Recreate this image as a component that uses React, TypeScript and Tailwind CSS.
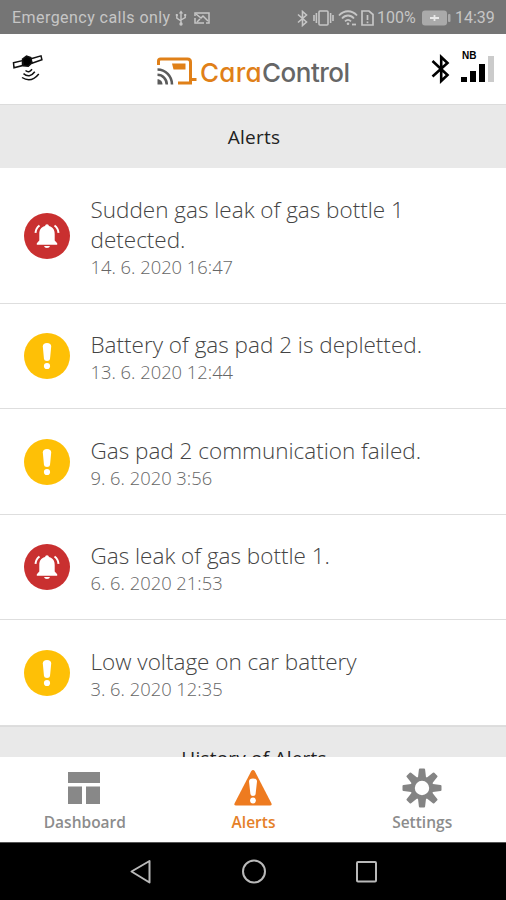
import type { ReactNode } from 'react';

type Alert = {
  kind: 'gas' | 'warning';
  title: string;
  date: string;
};

const alerts: Alert[] = [
  { kind: 'gas', title: 'Sudden gas leak of gas bottle 1 detected.', date: '14. 6. 2020 16:47' },
  { kind: 'warning', title: 'Battery of gas pad 2 is depletted.', date: '13. 6. 2020 12:44' },
  { kind: 'warning', title: 'Gas pad 2 communication failed.', date: '9. 6. 2020 3:56' },
  { kind: 'gas', title: 'Gas leak of gas bottle 1.', date: '6. 6. 2020 21:53' },
  { kind: 'warning', title: 'Low voltage on car battery', date: '3. 6. 2020 12:35' },
];

function StatusBar() {
  return (
    <div className="flex h-[34px] shrink-0 items-center justify-between bg-[#757575] pr-[10px] pl-3 pt-[2px] font-['Roboto',sans-serif] text-[16px] text-[#c6c6c6]">
      <div className="flex items-center">
        <span className="w-[158px] whitespace-nowrap tracking-[0.45px]">Emergency calls only</span>
        <svg className="ml-[5px]" width="12" height="16" viewBox="0 0 12 16" fill="none" stroke="currentColor" strokeWidth="1.4">
          <path d="M6 2v12M1.8 5v3.2L6 11M10.2 5v2.5L6 10" />
          <path d="M3.8 3.6 6 .6l2.2 3z" fill="currentColor" stroke="none" />
          <circle cx="6" cy="14" r="1.7" fill="currentColor" stroke="none" />
          <path d="M.8 4h2v2h-2zM9.2 4h2v2h-2z" fill="currentColor" stroke="none" />
        </svg>
        <svg className="ml-[7px]" width="16" height="12" viewBox="0 0 16 12" fill="none" stroke="currentColor" strokeWidth="1.5">
          <path d="M1 4V1h14v10h-3M1 6v5h9" />
          <path d="m2 2 5 4 2-2 5 5M3 10l3-3" />
        </svg>
      </div>
      <div className="flex items-center">
        <svg width="11" height="17" viewBox="0 0 11 17" fill="none" stroke="currentColor" strokeWidth="1.6">
          <path d="m1 4.5 8.5 7.5-4 3.5v-14l4 3.5L1 12.5" />
        </svg>
        <svg className="ml-[5px]" width="21" height="16" viewBox="0 0 21 16" fill="none" stroke="currentColor" strokeWidth="1.6">
          <rect x="6" y="1" width="9" height="14" rx="1" />
          <path d="M3.4 3v10M1 5v6M17.6 3v10M20 5v6" />
        </svg>
        <svg className="ml-[4px]" width="20" height="16" viewBox="0 0 20 16" fill="none" stroke="currentColor" strokeWidth="1.8">
          <path d="M1 5.5C6-.2 14-.2 19 5.5M4 8.5c3.5-4 8.5-4 12 0M7 11.3c2-2 4-2 6 0" />
          <circle cx="10" cy="13.8" r="1.3" fill="currentColor" stroke="none" />
          <path d="M14 14.5h4" />
        </svg>
        <svg className="ml-[3px]" width="13" height="16" viewBox="0 0 13 16" fill="none" stroke="currentColor" strokeWidth="1.7">
          <path d="M1 1h7l4 3.5V15H1zM6.5 5v5M6.5 11.4v1.8" />
        </svg>
        <span className="ml-[3px] w-[39px] whitespace-nowrap">100%</span>
        <svg className="ml-[6px]" width="29" height="16" viewBox="0 0 29 16">
          <rect x="0" y="0.5" width="25" height="15" rx="3" fill="#aaa" />
          <rect x="26" y="4" width="2.5" height="8" rx="1" fill="#aaa" />
          <path d="M12.5 5v6M8 8h9" stroke="#e8e8e8" strokeWidth="1.8" />
        </svg>
        <span className="ml-[4px] w-[41px] whitespace-nowrap">14:39</span>
      </div>
    </div>
  );
}

function SatelliteIcon() {
  return (
    <svg width="32" height="30" viewBox="0 0 32 30" fill="none" stroke="#111" strokeWidth="1.5">
      <path d="m1.5 9.8 9-2.2v5L2 14.8z M19 5.800l10-2.900.9 3.800L20 10.200z" />
      <path d="m10.5 6.2 4-3 4.3 1.3.9 5.5-3.4 3.2-4.8-.4z" fill="#000" />
      <path d="M13.5 17.5q3.5 3 6.500-1.200M11.500 20.700q6 5 11.300-2M10 24.500q9 6 16.800-3.500" />
    </svg>
  );
}

function Logo() {
  return (
    <div className="flex items-center">
      <svg width="41" height="30" viewBox="0 0 41 30" fill="none">
        <path d="M2.500 9V5Q2.500 3 4.500 3h27Q34.500 3 34.500 6V27H22M34 23.500h6.500" stroke="#e08018" strokeWidth="3" />
        <path d="M16 7.500h13.500V13.500H17.500z" fill="#e08018" />
        <path d="M1.500 13.500c8 0 14.500 6.500 14.500 15M1.500 18.800c5 0 9.300 4.300 9.300 9.700" stroke="#5b5b5b" strokeWidth="2.600" />
        <path d="M1.500 23.200c3 0 5 2.300 5 5.300H1.500z" fill="#5b5b5b" />
      </svg>
      <div className="ml-[3px] mt-[5px] flex whitespace-nowrap font-['Inter',sans-serif] text-[26px] leading-[30px] [font-feature-settings:'cv11']">
        <span className="w-[62px] font-medium tracking-[0.3px] text-[#e08018]">Cara</span>
        <span className="w-[90px] font-medium tracking-[-0.5px] text-[#666]">Control</span>
      </div>
    </div>
  );
}

function Header() {
  return (
    <header className="flex h-[70px] shrink-0 items-start bg-white pt-[19px]">
      <div className="ml-3">
        <SatelliteIcon />
      </div>
      <div className="ml-[112px]">
        <Logo />
      </div>
      <svg className="mt-[1px] ml-[79px]" width="20" height="30" viewBox="0 0 20 30" fill="none" stroke="#000" strokeWidth="2.600">
        <path d="m1.500 7 15 14-6.300 6V3l6.300 6-15 13.500" />
      </svg>
      <div className="-mt-[3px] ml-[10px] w-[34px]">
        <div className="h-[9px] pl-px font-['Liberation_Sans',sans-serif] text-[10px] leading-[11px] font-bold text-black">NB</div>
        <div className="-mt-[3px] flex h-[26px] items-end gap-[3px]">
          <div className="h-[5px] w-[6px] bg-black" />
          <div className="h-[11px] w-[6px] bg-black" />
          <div className="h-[18px] w-[6px] bg-black" />
          <div className="h-[26px] w-[6px] bg-[#cbcbcb]" />
        </div>
      </div>
    </header>
  );
}

function SectionTitle({ children }: { children: ReactNode }) {
  return (
    <div className="flex h-16 shrink-0 items-center justify-center border-t border-[#dcdcdc] bg-[#e9e9e9] pt-px pl-[2px] text-[19px] tracking-[0.2px] text-[#222]">
      {children}
    </div>
  );
}

function AlertIcon({ kind }: { kind: Alert['kind'] }) {
  if (kind === 'gas') {
    return (
      <svg className="shrink-0" width="46" height="46" viewBox="0 0 46 46">
        <circle cx="23" cy="23" r="23" fill="#c93030" />
        <path d="M23 11.3q1.7 0 2 1.8c4.2 1 5.7 4.2 5.7 8v6.400l2.500 2.700v1.500H12.800v-1.500l2.500-2.700v-6.400c0-3.800 1.500-7 5.700-8q.3-1.800 2-1.800zM20 33h6q-.5 2-3 2t-3-2z" fill="#fff" />
        <path d="M11.500 19.800q.4-4.700 4-7.300M34.500 19.800q-.4-4.700-4-7.300" stroke="#fff" strokeWidth="2" fill="none" />
      </svg>
    );
  }
  return (
    <svg className="shrink-0" width="46" height="46" viewBox="0 0 46 46">
      <circle cx="23" cy="23" r="23" fill="#fec006" />
      <path d="M18.800 13.500q0-3.500 4.200-3.500t4.200 3.500l-1.200 12.500q-.2 2-3 2t-3-2z" fill="#fff" />
      <circle cx="23" cy="33" r="3.100" fill="#fff" />
    </svg>
  );
}

function AlertRow({ alert }: { alert: Alert }) {
  return (
    <div className="flex items-center border-b border-[#dedede] pt-[25.5px] pb-[25px] pl-6">
      <AlertIcon kind={alert.kind} />
      <div className="ml-[20.5px] w-[350px] pt-px -mb-px font-light">
        <div className="text-[22.5px] leading-[30px] text-[#444]">{alert.title}</div>
        <div className="text-[18.35px] leading-6 text-[#666]">{alert.date}</div>
      </div>
    </div>
  );
}

function DashboardIcon() {
  return (
    <svg width="40" height="40" viewBox="0 0 40 40" fill="#888">
      <path d="M4 4h32v11H4zM4 18.500h14V36H4zM22 18.500h14V36H22z" />
    </svg>
  );
}

function WarningIcon() {
  return (
    <svg width="40" height="40" viewBox="0 0 40 40">
      <path d="M18.300 3q1.700-2 3.400 0L38.500 35.500q.5 2-1.500 2H3q-2 0-1.500-2z" fill="#ee7b20" />
      <path d="M16 13.500q0-3 4-3t4 3l-1.400 12.500q-.2 2-2.600 2t-2.600-2z" fill="#fff" />
      <circle cx="20" cy="32.500" r="2.900" fill="#fff" />
    </svg>
  );
}

const teeth = [0, 45, 90, 135, 180, 225, 270, 315];

function SettingsIcon() {
  return (
    <svg width="40" height="40" viewBox="0 0 40 40">
      {teeth.map((angle) => (
        <path key={angle} d="M15.800 11 16.900 1.500q.1-1 1-1h4.200q.9 0 1 1L24.200 11z" fill="#848484" transform={`rotate(${angle} 20 20)`} />
      ))}
      <circle cx="20" cy="20" r="9.400" fill="none" stroke="#848484" strokeWidth="4.400" />
    </svg>
  );
}

function TabItem({ icon, label, active }: { icon: ReactNode; label: string; active?: boolean }) {
  return (
    <div className={`flex flex-1 flex-col items-center pt-[11px] text-[15.5px] leading-[22px] font-semibold ${active ? 'text-[#e58028]' : 'text-[#8c8c8c]'}`}>
      {icon}
      <span className="mt-[3px] ml-px">{label}</span>
    </div>
  );
}

function SystemNav() {
  return (
    <div className="flex h-[58px] shrink-0 items-center justify-center gap-[88px] border-t border-[#555] bg-black pl-px">
      <svg width="24" height="26" viewBox="0 0 24 26" fill="none" stroke="#b9b9b9" strokeWidth="2" strokeLinejoin="round">
        <path d="M2.500 12.500 20.500 2v21.500z" />
      </svg>
      <svg width="26" height="26" viewBox="0 0 26 26" fill="none" stroke="#b9b9b9" strokeWidth="2">
        <circle cx="13" cy="12.500" r="11" />
      </svg>
      <svg width="24" height="26" viewBox="0 0 24 26" fill="none" stroke="#b9b9b9" strokeWidth="2">
        <rect x="2" y="3" width="19" height="19.500" rx="1" />
      </svg>
    </div>
  );
}

export default function App() {
  return (
    <div className="flex h-[900px] w-[506px] flex-col overflow-hidden bg-white font-['Open_Sans',sans-serif]">
      <StatusBar />
      <Header />
      <main className="h-[653px] shrink-0 overflow-hidden">
        <SectionTitle>Alerts</SectionTitle>
        {alerts.map((alert) => (
          <AlertRow key={alert.date} alert={alert} />
        ))}
        <SectionTitle>History of Alerts</SectionTitle>
      </main>
      <nav className="flex h-[85px] shrink-0 bg-white">
        <TabItem icon={<DashboardIcon />} label="Dashboard" />
        <TabItem icon={<WarningIcon />} label="Alerts" active />
        <TabItem icon={<SettingsIcon />} label="Settings" />
      </nav>
      <SystemNav />
    </div>
  );
}
